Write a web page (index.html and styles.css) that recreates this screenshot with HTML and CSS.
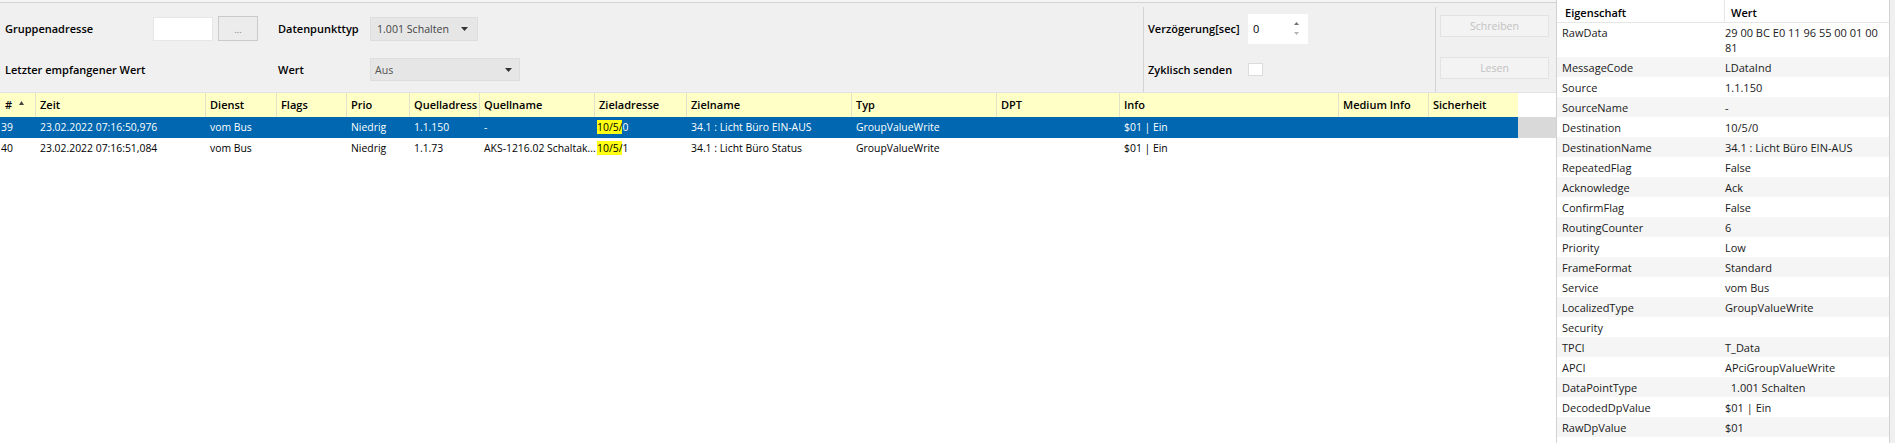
FILE: index.html
```html
<!DOCTYPE html>
<html lang="de">
<head>
<meta charset="utf-8">
<title>Gruppenmonitor</title>
<link rel="stylesheet" href="styles.css">
</head>
<body>
<div class="app">
  <div class="main">
    <div class="toolbar">
      <div class="panel">
        <div class="sec sec-a">
          <div class="lbl">Gruppenadresse</div>
          <div class="ga"><div class="textbox"></div><div class="btn-dots">...</div></div>
          <div class="lbl">Datenpunkttyp</div>
          <div class="combo combo-dpt"><span>1.001 Schalten</span><svg class="arrow" width="7" height="4" viewBox="0 0 7 4"><polygon points="0,0 7,0 3.5,4" fill="#333"/></svg></div>
          <div class="lbl">Letzter empfangener Wert</div>
          <div></div>
          <div class="lbl">Wert</div>
          <div class="combo combo-wert"><span>Aus</span><svg class="arrow" width="7" height="4" viewBox="0 0 7 4"><polygon points="0,0 7,0 3.5,4" fill="#333"/></svg></div>
        </div>
        <div class="sec sec-b">
          <div class="lbl">Verzögerung[sec]</div>
          <div class="spin"><span>0</span>
            <div class="spin-btns">
              <svg width="5" height="3" viewBox="0 0 5 3"><polygon points="0,3 5,3 2.5,0" fill="#707070"/></svg>
              <svg width="5" height="3" viewBox="0 0 5 3"><polygon points="0,0 5,0 2.5,3" fill="#b4b4b4"/></svg>
            </div>
          </div>
          <div class="lbl">Zyklisch senden</div>
          <div class="check"></div>
        </div>
        <div class="sec sec-c">
          <div class="btn-dis">Schreiben</div>
          <div class="btn-dis">Lesen</div>
        </div>
      </div>
    </div>
    <div class="table">
      <div class="row thead">
        <div class="c">#<svg class="sort" width="5" height="4" viewBox="0 0 5 4"><polygon points="0,4 5,4 2.5,0" fill="#444"/></svg></div>
        <div class="c">Zeit</div>
        <div class="c">Dienst</div>
        <div class="c">Flags</div>
        <div class="c">Prio</div>
        <div class="c">Quelladress</div>
        <div class="c">Quellname</div>
        <div class="c">Zieladresse</div>
        <div class="c">Zielname</div>
        <div class="c">Typ</div>
        <div class="c">DPT</div>
        <div class="c">Info</div>
        <div class="c">Medium Info</div>
        <div class="c">Sicherheit</div>
        <div class="fill"></div>
      </div>
      <div class="row sel">
        <div class="c num">39</div>
        <div class="c">23.02.2022 07:16:50,976</div>
        <div class="c">vom Bus</div>
        <div class="c"></div>
        <div class="c">Niedrig</div>
        <div class="c">1.1.150</div>
        <div class="c">-</div>
        <div class="c ziel"><span class="hl">10/5/</span>0</div>
        <div class="c">34.1 : Licht Büro EIN-AUS</div>
        <div class="c">GroupValueWrite</div>
        <div class="c"></div>
        <div class="c">$01 | Ein</div>
        <div class="c"></div>
        <div class="c"></div>
        <div class="fill"></div>
      </div>
      <div class="row">
        <div class="c num">40</div>
        <div class="c">23.02.2022 07:16:51,084</div>
        <div class="c">vom Bus</div>
        <div class="c"></div>
        <div class="c">Niedrig</div>
        <div class="c">1.1.73</div>
        <div class="c qn">AKS-1216.02 Schaltak...</div>
        <div class="c ziel"><span class="hl">10/5/</span>1</div>
        <div class="c">34.1 : Licht Büro Status</div>
        <div class="c">GroupValueWrite</div>
        <div class="c"></div>
        <div class="c">$01 | Ein</div>
        <div class="c"></div>
        <div class="c"></div>
        <div class="fill"></div>
      </div>
    </div>
  </div>
  <div class="props">
    <div class="ph"><div>Eigenschaft</div><div>Wert</div></div>
    <div class="prows">
      <div class="pr two"><div class="pn">RawData</div><div class="pv">29 00 BC E0 11 96 55 00 01 00 81</div></div>
      <div class="pr"><div class="pn">MessageCode</div><div class="pv">LDataInd</div></div>
      <div class="pr"><div class="pn">Source</div><div class="pv">1.1.150</div></div>
      <div class="pr"><div class="pn">SourceName</div><div class="pv">-</div></div>
      <div class="pr"><div class="pn">Destination</div><div class="pv">10/5/0</div></div>
      <div class="pr"><div class="pn">DestinationName</div><div class="pv">34.1 : Licht Büro EIN-AUS</div></div>
      <div class="pr"><div class="pn">RepeatedFlag</div><div class="pv">False</div></div>
      <div class="pr"><div class="pn">Acknowledge</div><div class="pv">Ack</div></div>
      <div class="pr"><div class="pn">ConfirmFlag</div><div class="pv">False</div></div>
      <div class="pr"><div class="pn">RoutingCounter</div><div class="pv">6</div></div>
      <div class="pr"><div class="pn">Priority</div><div class="pv">Low</div></div>
      <div class="pr"><div class="pn">FrameFormat</div><div class="pv">Standard</div></div>
      <div class="pr"><div class="pn">Service</div><div class="pv">vom Bus</div></div>
      <div class="pr"><div class="pn">LocalizedType</div><div class="pv">GroupValueWrite</div></div>
      <div class="pr"><div class="pn">Security</div><div class="pv"></div></div>
      <div class="pr"><div class="pn">TPCI</div><div class="pv">T_Data</div></div>
      <div class="pr"><div class="pn">APCI</div><div class="pv">APciGroupValueWrite</div></div>
      <div class="pr"><div class="pn">DataPointType</div><div class="pv">&nbsp;&nbsp;1.001 Schalten</div></div>
      <div class="pr"><div class="pn">DecodedDpValue</div><div class="pv">$01 | Ein</div></div>
      <div class="pr"><div class="pn">RawDpValue</div><div class="pv">$01</div></div>
    </div>
  </div>
</div>
</body>
</html>
```

FILE: styles.css
```css
* { box-sizing: border-box; }

body {
  margin: 0;
  width: 1895px;
  height: 443px;
  overflow: hidden;
  background: #f0f0f0;
  font-family: "Open Sans", "Noto Sans", sans-serif;
  color: #000;
}

.app {
  display: flex;
  height: 443px;
}

.main {
  width: 1556px;
  flex: none;
  display: flex;
  flex-direction: column;
  background: #fff;
}

/* ---------- toolbar ---------- */
.toolbar {
  height: 93px;
  padding-top: 2px;
  background: #f4f4f4;
}

.panel {
  height: 91px;
  border-top: 1px solid #d4d4d4;
  border-bottom: 1px solid #e2e2e2;
  background: #f0f0f0;
  display: flex;
}

.lbl {
  font-size: 11px;
  font-weight: 600;
  white-space: nowrap;
  line-height: 15px;
}

.sec-a {
  width: 1143px;
  padding: 13px 0 0 5px;
  display: grid;
  grid-template-columns: 148px 125px 92px auto;
  grid-template-rows: 25px 25px;
  row-gap: 16px;
  align-items: center;
  justify-items: start;
  align-content: start;
}

.ga {
  display: flex;
  align-items: center;
  gap: 5px;
}

.textbox {
  width: 60px;
  height: 24px;
  background: #fff;
  border: 1px solid #e6e6e6;
}

.btn-dots {
  width: 40px;
  height: 25px;
  background: #ececec;
  border: 1px solid #cacaca;
  font-size: 9px;
  color: #777;
  text-align: center;
  line-height: 26px;
}

.combo {
  height: 24px;
  display: flex;
  align-items: center;
  justify-content: space-between;
  background: #e6e6e6;
  border: 1px solid #dedede;
  font-size: 10.6px;
  color: #444;
  padding: 0 9px 0 6px;
}

.combo-dpt { width: 108px; }
.combo-wert { width: 150px; height: 23px; color: #555; padding: 0 7px 0 4px; }

.sec-b {
  width: 292px;
  margin-top: 4px;
  border-left: 1px solid #d4d4d4;
  padding: 9px 0 0 4px;
  display: grid;
  grid-template-columns: 100px auto;
  grid-template-rows: 25px 25px;
  row-gap: 16px;
  align-items: center;
  justify-items: start;
  align-content: start;
}

.spin {
  width: 60px;
  height: 30px;
  background: #fff;
  display: flex;
  align-items: center;
  justify-content: space-between;
  padding: 0 9px 0 5px;
  font-size: 11px;
}

.spin-btns {
  display: flex;
  flex-direction: column;
  gap: 7px;
}

.spin-btns svg { display: block; }

.check {
  width: 15px;
  height: 13px;
  background: #fff;
  border: 1px solid #dcdcdc;
}

.sec-c {
  flex: 1;
  margin-top: 4px;
  border-left: 1px solid #d4d4d4;
  padding: 8px 0 0 4px;
  display: flex;
  flex-direction: column;
  gap: 20px;
}

.btn-dis {
  width: 109px;
  height: 22px;
  background: #f3f3f3;
  border: 1px solid #e3e3e3;
  color: #c2c2c2;
  font-size: 10.5px;
  text-align: center;
  line-height: 20px;
}

/* ---------- table ---------- */
.table {
  flex: 1;
  background: #fff;
}

.row {
  display: grid;
  grid-template-columns: 35px 170px 71px 70px 63px 70px 115px 92px 165px 145px 123px 219px 90px 90px 1fr;
  height: 21px;
  font-size: 10.4px;
  line-height: 21px;
}

.row .c {
  padding-left: 5px;
  overflow: hidden;
  white-space: nowrap;
  text-overflow: ellipsis;
}

.row .c.num { padding-left: 1px; }
.row .c.ziel { padding-left: 3px; text-overflow: clip; }
.row .c.qn { overflow: visible; text-overflow: clip; }

.thead {
  height: 24px;
  line-height: 24px;
  font-size: 11px;
  font-weight: 600;
}

.thead .c {
  background: #ffffc6;
  border-left: 1px solid #e3e3cc;
  padding-left: 4px;
  text-overflow: clip;
}

.thead .c:first-child {
  border-left: none;
  padding-left: 5px;
}

.sort {
  margin-left: 7px;
  vertical-align: 4px;
}

.thead .fill { background: #fff; }

.sel {
  background: #0067b0;
  color: #fff;
}

.sel .fill { background: #d9d9d9; }

.hl {
  background: #ffff14;
  color: #000;
}

/* ---------- property grid ---------- */
.props {
  width: 334px;
  flex: none;
  background: #fff;
  border-left: 1px solid #d2d2d2;
  border-right: 1px solid #d2d2d2;
  font-size: 11px;
  line-height: 15px;
}

.ph {
  display: grid;
  grid-template-columns: 167px 1fr;
  height: 23px;
  border-bottom: 1px solid #e6e6e6;
  font-weight: 600;
}

.ph div { padding: 5px 0 0 8px; }
.ph div + div { border-left: 1px solid #e6e6e6; padding-left: 6px; }

.pr {
  display: grid;
  grid-template-columns: 167px 1fr;
  padding: 3px 0 2px;
  color: #1a1a1a;
}

.pr.two { padding: 2px 0 2px; }

.prows .pr:nth-child(even) { background: #f5f5f5; }

.pn { padding-left: 5px; white-space: nowrap; }
.pv { padding: 0 3px 0 1px; }
```
